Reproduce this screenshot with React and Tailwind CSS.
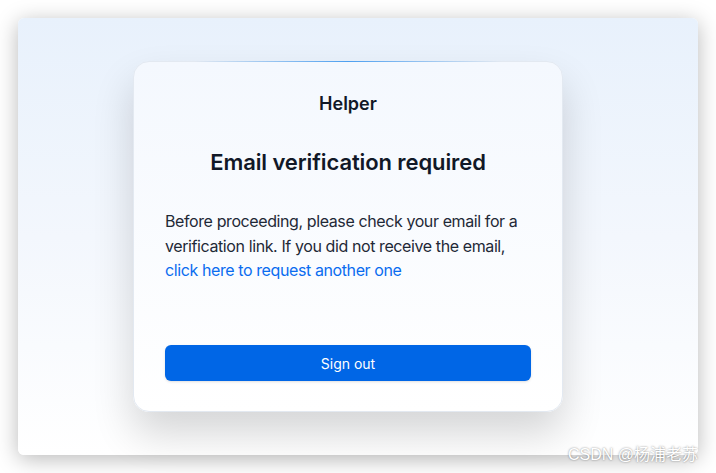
import React from 'react';

const App = () => {
  return (
    <div className="relative w-[716px] h-[473px] bg-white p-[18px] overflow-hidden" style={{ fontFamily: 'Inter, "Noto Sans", sans-serif' }}>
      <div className="w-full h-full rounded-[6px] bg-gradient-to-b from-[#e8f1fc] via-[#f3f7fd] to-white shadow-[0_4px_22px_rgba(0,0,0,0.28)] flex pl-[115px] pt-[43px]">
        <div className="relative w-[430px] h-[351px] rounded-[16px] bg-gradient-to-b from-[#f4f8fe] to-white border border-[#e3e9f1] shadow-[0_22px_40px_rgba(0,0,0,0.16)] flex flex-col px-[31px] pt-[28px] pb-[30px]">
          <div className="absolute -top-px left-[60px] right-[60px] h-px bg-gradient-to-r from-transparent via-[#4d9ff0] to-transparent" />
          <div className="text-center text-[18px] leading-[28px] font-semibold text-[#111827]">Helper</div>
          <h1 className="mt-[30px] text-center text-[22px] leading-[28px] font-semibold text-[#111827] tracking-[-0.1px]">
            Email verification required
          </h1>
          <p className="mt-[33px] text-[16px] leading-[24.5px] text-[#1f2937] tracking-[-0.4px]">
            Before proceeding, please check your email for a verification link. If you did not receive the email,{' '}
            <a href="#" className="text-[#0a6cf0]">click here to request another one</a>
          </p>
          <div className="flex-1" />
          <button className="w-full h-[36px] rounded-[6px] bg-[#0066e6] text-white text-[14px] font-normal shadow-sm">
            Sign out
          </button>
        </div>
      </div>
      <div
        className="absolute right-[18px] bottom-[8px] text-[16px] text-white leading-[20px] [text-shadow:0_0_2px_rgba(0,0,0,0.5)]"
        style={{ fontFamily: '"Liberation Sans", "Noto Sans CJK SC", sans-serif' }}
      >
        CSDN @杨浦老苏
      </div>
    </div>
  );
};

export default App;
